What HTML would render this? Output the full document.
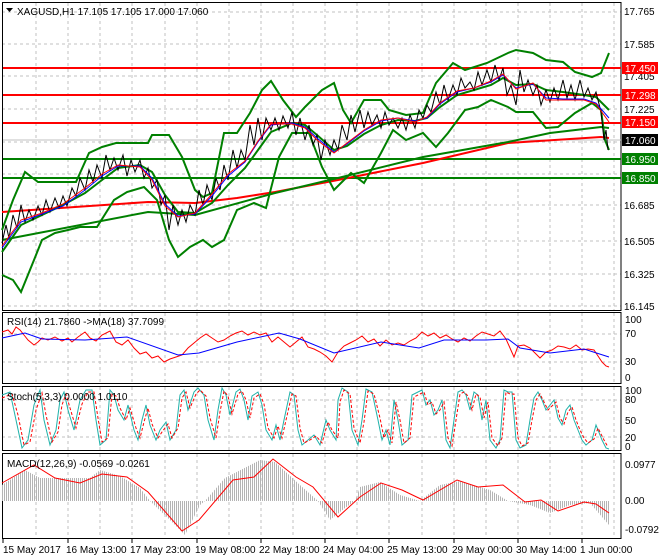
<!DOCTYPE html>
<html><head><meta charset="utf-8"><style>
body{margin:0;background:#fff;}
svg{display:block;font-family:"Liberation Sans",sans-serif;}
</style></head><body>
<svg width="660" height="560" viewBox="0 0 660 560" xmlns="http://www.w3.org/2000/svg">
<defs>
<pattern id="hist" width="2" height="4" patternUnits="userSpaceOnUse"><rect x="0" y="0" width="1" height="4" fill="#b4b4b4"/></pattern>
</defs>
<rect width="660" height="560" fill="#fff"/>
<!-- grid -->
<g stroke="#c0c0c0" stroke-dasharray="3,3" stroke-width="1">
<path d="M36 3V310M68 3V310M100 3V310M132 3V310M165 3V310M197 3V310M229 3V310M261 3V310M293 3V310M325 3V310M357 3V310M389 3V310M422 3V310M454 3V310M486 3V310M518 3V310M550 3V310M582 3V310M614 3V310"/>
<path d="M2 12H621M2 44H621M2 76H621M2 109H621M2 142H621M2 174H621M2 205H621M2 241H621M2 274H621M2 306H621"/>
<path d="M36 313V383M68 313V383M100 313V383M132 313V383M165 313V383M197 313V383M229 313V383M261 313V383M293 313V383M325 313V383M357 313V383M389 313V383M422 313V383M454 313V383M486 313V383M518 313V383M550 313V383M582 313V383M614 313V383"/>
<path d="M2 334H621M2 362H621"/>
<path d="M36 387V450M68 387V450M100 387V450M132 387V450M165 387V450M197 387V450M229 387V450M261 387V450M293 387V450M325 387V450M357 387V450M389 387V450M422 387V450M454 387V450M486 387V450M518 387V450M550 387V450M582 387V450M614 387V450"/>
<path d="M2 400H621M2 437H621"/>
<path d="M36 454V538M68 454V538M100 454V538M132 454V538M165 454V538M197 454V538M229 454V538M261 454V538M293 454V538M325 454V538M357 454V538M389 454V538M422 454V538M454 454V538M486 454V538M518 454V538M550 454V538M582 454V538M614 454V538"/>
</g>
<!-- panels borders -->
<g fill="none" stroke="#000" stroke-width="1">
<rect x="2.5" y="2.5" width="618.5" height="308"/>
<rect x="2.5" y="312.5" width="618.5" height="71"/>
<rect x="2.5" y="386.5" width="618.5" height="64"/>
<rect x="2.5" y="453.5" width="618.5" height="85"/>
</g>
<!-- current price line -->
<line x1="3" y1="140" x2="621" y2="140" stroke="#c0c0c0"/>
<!-- horizontal levels -->
<g stroke-width="2">
<line x1="3" y1="68" x2="621" y2="68" stroke="#ff0000"/>
<line x1="3" y1="95" x2="621" y2="95" stroke="#ff0000"/>
<line x1="3" y1="123" x2="621" y2="123" stroke="#ff0000"/>
<line x1="3" y1="159" x2="621" y2="159" stroke="#008000"/>
<line x1="3" y1="178" x2="621" y2="178" stroke="#008000"/>
</g>
<!-- long MAs -->
<polyline fill="none" stroke="#ff0000" stroke-width="2" points="2,212 148,202 195,203 237,198 275,192 338,180 423,163 508,143 601,137 609,138"/>
<polyline fill="none" stroke="#008000" stroke-width="2" points="2,240 148,212 195,215 275,193 338,178 423,157 508,142 550,133 601,127 609,128"/>
<!-- bollinger -->
<polyline fill="none" stroke="#008000" stroke-width="2" points="2,230 13,200 25,172 38,182 55,182 76,182 89,153 102,147 116,143 127,143 148,143 152,135 169,135 182,157 195,190 203,197 212,193 224,133 237,133 250,113 262,90 271,81 283,100 296,117 305,107 322,90 334,83 343,110 351,123 364,100 381,100 389,110 406,115 423,113 436,83 453,63 465,70 487,63 508,53 516,50 533,53 546,60 563,62 575,72 592,77 601,73 609,53"/>
<polyline fill="none" stroke="#008000" stroke-width="2" points="2,275 13,280 21,292 34,260 42,240 55,233 68,230 80,227 97,227 114,200 127,192 144,187 157,200 169,240 178,257 190,247 203,240 212,247 224,240 237,210 254,203 266,208 279,157 292,133 309,133 322,167 334,190 351,173 364,183 381,153 393,130 406,140 423,133 436,147 448,133 465,110 478,107 491,100 508,107 516,112 533,112 546,128 558,127 575,113 592,103 601,110 605,140 609,150"/>
<!-- middle band -->
<polyline fill="none" stroke="#008000" stroke-width="2" points="2,252 21,225 42,215 63,205 85,193 102,180 118,168 140,165 152,172 165,195 178,212 195,213 212,203 228,185 245,168 258,150 271,132 292,123 305,125 317,135 334,150 347,146 364,134 381,125 398,120 415,121 427,118 440,107 457,95 474,90 491,85 503,78 516,85 533,84 546,90 563,92 584,95 596,97 609,110"/>
<!-- price bars -->
<polyline fill="none" stroke="#000" stroke-width="1" points="2,243 6,225 9,238 13,215 17,228 21,205 25,222 29,210 33,220 38,206 42,215 46,200 50,212 55,198 59,208 63,196 67,206 72,188 76,196 80,178 85,190 89,170 93,182 97,165 102,178 106,155 110,170 114,158 118,170 123,155 127,176 131,160 135,172 140,160 144,178 148,168 152,188 157,180 161,205 165,195 169,230 173,205 178,225 182,210 186,222 190,205 195,215 199,190 203,205 207,185 212,200 216,178 220,190 224,165 228,180 233,150 237,168 241,150 245,160 250,125 254,145 258,118 262,140 266,118 271,130 275,118 279,130 283,116 288,128 292,112 296,135 300,118 305,140 309,125 313,145 317,135 321,160 325,140 330,155 334,140 338,150 342,125 347,140 351,115 355,132 360,110 364,128 368,112 372,125 377,115 381,128 385,112 389,125 393,118 398,128 402,118 406,130 410,115 415,128 419,110 423,118 427,105 431,112 436,92 440,105 444,85 448,100 453,85 457,95 461,78 465,88 470,82 474,90 478,72 482,85 487,70 491,82 495,65 499,80 503,68 507,95 511,85 516,105 520,70 524,92 528,80 533,95 537,85 541,105 546,90 550,102 554,88 558,100 563,80 567,98 571,85 575,100 580,80 584,97 588,88 592,100 596,92 601,112 604,140 606,130 608,150"/>
<!-- small MAs -->
<polyline fill="none" stroke="#0000ff" stroke-width="1" points="2,248 21,222 42,214 63,206 85,190 102,176 118,166 140,166 152,178 165,204 178,216 195,214 212,196 228,176 245,162 258,142 271,125 292,123 305,127 317,138 334,152 347,144 364,131 381,121 398,118 415,121 427,118 440,104 457,92 474,88 491,82 503,75 516,88 533,84 546,98 563,99 584,99 596,103 609,118"/>
<polyline fill="none" stroke="#ff0000" stroke-width="1" points="2,246 21,220 42,213 63,204 85,188 102,174 118,165 140,167 152,180 165,206 178,217 195,213 212,194 228,174 245,161 258,141 271,124 292,124 305,128 317,140 334,153 347,143 364,130 381,120 398,118 415,122 427,117 440,103 457,91 474,88 491,81 503,74 516,89 533,83 546,100 563,100 584,100 596,104 609,122"/>
<!-- title -->
<path d="M6 8h7l-3.5 4z" fill="#000"/>
<text x="17" y="15" font-size="10" fill="#000">XAGUSD,H1  17.105 17.105 17.000 17.060</text>
<!-- price axis -->
<g font-size="10" fill="#000">
<text x="624" y="15">17.765</text>
<text x="624" y="48">17.585</text>
<text x="624" y="80">17.405</text>
<text x="624" y="113">17.225</text>
<text x="624" y="209">16.685</text>
<text x="624" y="245">16.505</text>
<text x="624" y="278">16.325</text>
<text x="624" y="310">16.145</text>
</g>
<g font-size="10" fill="#fff">
<rect x="622" y="62" width="36" height="12" fill="#ff0000"/><text x="625" y="72">17.450</text>
<rect x="622" y="89" width="36" height="12" fill="#ff0000"/><text x="625" y="99">17.298</text>
<rect x="622" y="116" width="36" height="12" fill="#ff0000"/><text x="625" y="126">17.150</text>
<rect x="622" y="134" width="36" height="12" fill="#000"/><text x="625" y="144">17.060</text>
<rect x="622" y="153" width="36" height="12" fill="#008000"/><text x="625" y="163">16.950</text>
<rect x="622" y="172" width="36" height="12" fill="#008000"/><text x="625" y="182">16.850</text>
</g>
<!-- RSI -->
<polyline fill="none" stroke="#ff0000" stroke-width="1" points="2,332 8,330 12,334 16,327 20,330 24,335 28,340 34,345 38,342 42,338 48,340 55,337 62,341 68,338 72,342 78,337 85,332 90,338 96,341 102,335 110,331 116,342 122,345 128,340 134,348 140,354 146,352 152,358 158,356 164,362 170,359 176,357 182,355 188,348 194,343 200,338 206,334 212,338 218,342 224,340 230,336 236,333 242,331 248,335 254,332 260,335 266,333 272,342 278,337 284,342 290,347 296,342 302,337 308,347 314,349 320,352 326,356 332,362 338,352 344,346 350,343 356,340 362,336 368,342 374,339 380,346 386,340 392,345 398,343 404,345 410,341 416,338 422,332 428,336 434,333 440,338 446,335 452,339 458,342 464,338 470,341 476,336 482,332 488,334 494,336 500,331 506,339 510,348 514,357 518,346 524,345 530,348 536,354 540,358 546,352 552,350 558,346 564,347 570,349 576,345 582,350 588,349 594,350 598,356 602,362 606,366 609,367"/>
<polyline fill="none" stroke="#0000ff" stroke-width="1" points="2,338 25,333 42,339 85,340 127,337 178,355 199,353 237,342 279,333 300,339 334,353 381,342 419,348 444,340 486,340 508,339 520,348 550,353 584,349 609,357"/>
<g font-size="10" fill="#000">
<text x="7" y="325">RSI(14) 21.7860  -&gt;MA(18) 37.7099</text>
<text x="625" y="323">100</text><text x="625" y="337">70</text><text x="625" y="365">30</text><text x="625" y="381">0</text>
</g>
<!-- Stoch -->
<polyline fill="none" stroke="#20b2aa" stroke-width="1" points="2,395 10,392 16,420 22,448 28,440 34,405 40,390 44,420 50,445 56,430 60,400 64,392 68,410 74,430 80,400 86,390 92,390 96,420 100,445 106,440 110,390 114,395 118,410 124,420 128,405 134,430 138,440 142,420 146,405 150,425 156,440 160,430 166,422 170,440 176,430 180,395 184,390 188,410 194,392 198,388 204,395 208,420 214,440 218,410 222,388 226,395 230,415 236,392 240,389 244,400 248,420 252,396 258,392 262,405 266,430 272,440 276,425 280,440 284,420 290,392 294,395 298,430 302,445 308,440 314,435 320,445 326,420 330,430 336,440 338,400 342,388 348,392 352,430 358,445 362,420 366,389 372,392 378,420 382,440 386,430 390,445 394,400 398,420 402,445 408,440 412,395 418,392 422,390 426,405 430,400 434,415 438,410 442,400 446,440 450,448 454,420 458,392 462,390 466,395 470,410 474,392 478,395 482,420 486,400 490,440 496,448 500,440 504,390 508,392 512,392 516,440 520,448 526,445 530,420 534,398 538,392 542,400 546,410 550,405 554,400 558,418 562,425 566,410 570,405 574,420 578,430 582,440 586,445 592,440 596,425 602,440 606,448 609,449"/>
<polyline fill="none" stroke="#ff0000" stroke-width="1" stroke-dasharray="3,2" points="2,398 12,394 18,415 24,445 30,442 36,410 42,393 46,415 52,442 58,432 62,405 66,394 70,408 76,428 82,404 88,392 94,392 98,418 102,442 108,438 112,394 116,396 120,408 126,420 130,408 136,428 140,438 144,422 148,408 152,424 158,438 162,432 168,424 172,438 178,428 182,398 186,392 190,408 196,394 200,390 206,396 210,418 216,438 220,412 224,391 228,396 232,414 238,394 242,391 246,400 250,418 254,398 260,394 264,404 268,428 274,438 278,426 282,438 286,420 292,394 296,396 300,428 304,443 310,440 316,436 322,443 328,422 332,430 338,438 340,402 344,390 350,394 354,428 360,443 364,422 368,391 374,394 380,418 384,438 388,430 392,443 396,402 400,420 404,443 410,438 414,397 420,394 424,392 428,405 432,402 436,414 440,410 444,402 448,438 452,446 456,420 460,394 464,392 468,396 472,410 476,394 480,397 484,418 488,402 492,438 498,446 502,438 506,392 510,394 514,394 518,438 522,446 528,443 532,420 536,400 540,394 544,402 548,410 552,406 556,402 560,418 564,424 568,412 572,407 576,420 580,430 584,438 588,443 594,439 598,428 604,440 608,447"/>
<g font-size="10" fill="#000">
<text x="7" y="400">Stoch(5,3,3) 0.0000 1.0110</text>
<text x="625" y="394">100</text><text x="625" y="403">80</text><text x="625" y="424">50</text><text x="625" y="441">20</text><text x="625" y="450">0</text>
</g>
<!-- MACD -->
<polygon fill="url(#hist)" points="2,501 2,485 25,470 40,478 90,478 100,470 120,476 140,488 150,501 170,520 185,535 200,505 205,501 225,478 260,460 275,462 300,485 318,501 330,520 345,508 355,501 360,487 380,482 400,495 420,501 440,485 460,481 490,490 508,501 530,505 550,513 570,505 590,503 609,525 609,501"/>
<polyline fill="none" stroke="#ff0000" stroke-width="1" points="2,483 34,465 55,478 80,483 102,474 127,477 148,492 182,531 199,520 233,480 254,477 273,459 296,477 313,487 338,517 360,497 381,483 402,490 423,500 457,480 478,487 503,485 525,502 541,500 558,511 584,502 596,504 609,513"/>
<g font-size="10" fill="#000">
<text x="7" y="467">MACD(12,26,9) -0.0569 -0.0261</text>
<text x="625" y="468">0.0977</text><text x="625" y="504">0.00</text><text x="625" y="533">-0.0792</text>
</g>
<!-- date axis -->
<g stroke="#000"><path d="M3 539v4M68 539v4M132 539v4M197 539v4M261 539v4M325 539v4M389 539v4M454 539v4M518 539v4M582 539v4"/></g>
<g font-size="10" fill="#000">
<text x="3" y="553">15 May 2017</text>
<text x="66" y="553">16 May 13:00</text>
<text x="130" y="553">17 May 23:00</text>
<text x="195" y="553">19 May 08:00</text>
<text x="259" y="553">22 May 18:00</text>
<text x="323" y="553">24 May 04:00</text>
<text x="387" y="553">25 May 13:00</text>
<text x="452" y="553">29 May 00:00</text>
<text x="516" y="553">30 May 14:00</text>
<text x="580" y="553">1 Jun 00:00</text>
</g>
</svg>
</body></html>
